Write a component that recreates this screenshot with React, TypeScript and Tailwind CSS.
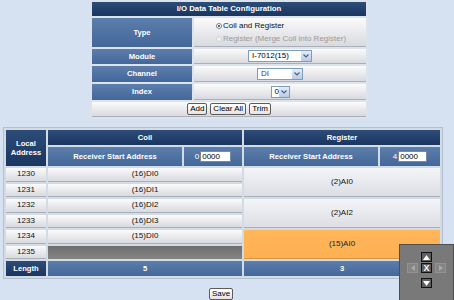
import React from "react";

const navy = "bg-linear-to-b from-[#2d4c78] to-[#193660] text-white font-bold";
const mid = "bg-linear-to-b from-[#5b7eac] to-[#44679a] text-white font-bold";
const light = "bg-linear-to-b from-[#fbfbfc] to-[#d9dadf] border-b border-[#a9b0ba] text-[#111]";
const pale = "bg-linear-to-b from-[#f4f5f8] to-[#dcdee4] border-b border-[#a9b0ba] text-[#111]";

const FakeSelect = ({ width, value, tint }: { width: string; value: string; tint?: string }) => (
  <div className={`flex items-stretch h-[12px] bg-white border border-[#7f9db9] ${width}`}>
    <span className={`flex-1 pl-[3px] text-left text-[8px] leading-[10px] ${tint ?? "text-black"}`}>{value}</span>
    <span className="w-[10px] bg-linear-to-b from-[#e4ecf9] to-[#b9cbe7] flex items-center justify-center">
      <svg width="6" height="4" viewBox="0 0 6 4">
        <path d="M0.5 0.5 L3 3 L5.5 0.5" stroke="#4d6185" strokeWidth="1.2" fill="none" />
      </svg>
    </span>
  </div>
);

const SmallButton = ({ label }: { label: string }) => (
  <span className="block h-[12px] px-[2px] border border-[#5b5b5b] rounded-[2px] bg-linear-to-b from-white to-[#e3e3e3] text-[8px] leading-[10px] text-black">
    {label}
  </span>
);

const Radio = ({ checked, disabled }: { checked?: boolean; disabled?: boolean }) => (
  <span
    className={`inline-flex items-center justify-center w-[6px] h-[6px] rounded-full border mr-[1px] ${
      disabled ? "border-[#cfd3d8] bg-[#f1f1f1]" : "border-[#7c8086] bg-white"
    }`}
  >
    {checked && <span className="w-[2px] h-[2px] rounded-full bg-[#333]" />}
  </span>
);

const rows = [
  { addr: 1230, coil: "(16)DI0", reg: "(2)AI0", orange: false },
  { addr: 1231, coil: "(16)DI1", reg: null, orange: false },
  { addr: 1232, coil: "(16)DI2", reg: "(2)AI2", orange: false },
  { addr: 1233, coil: "(16)DI3", reg: null, orange: false },
  { addr: 1234, coil: "(15)DI0", reg: "(15)AI0", orange: true },
  { addr: 1235, coil: null, reg: null, orange: false },
];

const NavBtn = ({ children, dim }: { children: React.ReactNode; dim?: boolean }) => (
  <span
    className={`flex items-center justify-center w-[11px] h-[10px] border ${
      dim ? "border-[#939393] bg-[#848484]" : "border-[#111] bg-[#5e5e5e]"
    }`}
  >
    {children}
  </span>
);

export default function App() {
  return (
    <div className="relative w-[454px] h-[300px] overflow-hidden bg-[#d6e2f1] font-['Liberation_Sans',Arial,sans-serif] text-[8px] leading-[10px]">
      {/* configuration table */}
      <table className="ml-[90px] w-[278px] border-separate border-spacing-[2px] bg-[#dde3ea] text-center">
        <tbody>
          <tr>
            <td colSpan={2} className={`${navy} h-[14px] p-0 text-[7.8px]`}>
              I/O Data Table Configuration
            </td>
          </tr>
          <tr>
            <td className={`${mid} w-[100px] h-[29px] p-0 text-[7.6px]`}>Type</td>
            <td className={`${light} p-0`}>
              <div className="flex justify-center">
                <div className="text-left leading-[13px] pl-[2px]">
                  <div className="flex items-center">
                    <Radio checked />
                    <span>Coil and Register</span>
                  </div>
                  <div className="flex items-center text-[#9a9a9a]">
                    <Radio disabled />
                    <span>Register (Merge Coil into Register)</span>
                  </div>
                </div>
              </div>
            </td>
          </tr>
          <tr>
            <td className={`${mid} h-[15px] p-0 text-[7.6px]`}>Module</td>
            <td className={`${light} p-0`}>
              <div className="flex justify-center">
                <FakeSelect width="w-[64px]" value="I-7012(15)" />
              </div>
            </td>
          </tr>
          <tr>
            <td className={`${mid} h-[16px] p-0 text-[7.6px]`}>Channel</td>
            <td className={`${light} p-0`}>
              <div className="flex justify-center">
                <FakeSelect width="w-[46px]" value="DI" tint="text-[#5a2b7a]" />
              </div>
            </td>
          </tr>
          <tr>
            <td className={`${mid} h-[16px] p-0 text-[7.6px]`}>Index</td>
            <td className={`${light} p-0`}>
              <div className="flex justify-center">
                <FakeSelect width="w-[19px]" value="0" />
              </div>
            </td>
          </tr>
          <tr>
            <td colSpan={2} className={`${light} h-[15px] p-0`}>
              <div className="flex justify-center gap-[3px]">
                <SmallButton label="Add" />
                <SmallButton label="Clear All" />
                <SmallButton label="Trim" />
              </div>
            </td>
          </tr>
        </tbody>
      </table>

      {/* mapping table */}
      <table className="mt-[9px] ml-[4px] w-[438px] border-separate border-spacing-x-[2px] border-spacing-y-[2px] bg-[#d3dbe5] outline outline-[#b3c0d0] text-center">
        <tbody>
          <tr>
            <td rowSpan={2} className={`${navy} w-[40px] p-0 text-[7.6px] leading-[9px]`}>
              Local
              <br />
              Address
            </td>
            <td colSpan={2} className={`${navy} h-[15px] p-0 text-[7.6px]`}>Coil</td>
            <td colSpan={2} className={`${navy} p-0 text-[7.6px]`}>Register</td>
          </tr>
          <tr>
            <td className={`${mid} w-[134px] h-[19px] p-0 text-[7.6px]`}>Receiver Start Address</td>
            <td className={`${mid} w-[58px] p-0 font-normal`}>
              <div className="flex items-center justify-center">
                <span className="mr-[1px]">0</span>
                <span className="w-[31px] h-[11px] bg-white border border-[#7a8a9e] text-black text-left pl-[1px] leading-[9px]">
                  0000
                </span>
              </div>
            </td>
            <td className={`${mid} w-[134px] p-0 text-[7.6px]`}>Receiver Start Address</td>
            <td className={`${mid} w-[60px] p-0 font-normal`}>
              <div className="flex items-center justify-center">
                <span className="mr-[1px]">4</span>
                <span className="w-[29px] h-[11px] bg-white border border-[#7a8a9e] text-black text-left pl-[1px] leading-[9px]">
                  0000
                </span>
              </div>
            </td>
          </tr>
          {rows.map((r, i) => (
            <tr key={r.addr}>
              <td className={`${light} h-[13.5px] p-0`}>{r.addr}</td>
              {r.coil ? (
                <td colSpan={2} className={`${light} p-0`}>{r.coil}</td>
              ) : (
                <td colSpan={2} className="p-0 bg-linear-to-b from-[#6d6d6d] to-[#868686]" />
              )}
              {i % 2 === 0 && (
                <td
                  colSpan={2}
                  rowSpan={2}
                  className={`p-0 ${
                    r.orange
                      ? "bg-linear-to-b from-[#ffb65a] to-[#fdb050] border-b border-[#d9963f] text-[#222]"
                      : pale
                  }`}
                >
                  {r.reg}
                </td>
              )}
            </tr>
          ))}
          <tr>
            <td className={`${navy} h-[15px] p-0 text-[7.6px]`}>Length</td>
            <td colSpan={2} className={`${mid} p-0 text-[7.6px]`}>5</td>
            <td colSpan={2} className={`${mid} p-0 text-[7.6px]`}>3</td>
          </tr>
        </tbody>
      </table>

      <div className="ml-[209px] mt-[10px] w-fit">
        <SmallButton label="Save" />
      </div>

      {/* floating navigation pad */}
      <div className="absolute left-[399px] top-[244px] w-[55px] h-[60px] bg-[#797979] border border-[#4e4e4e] flex flex-col items-center pt-[7px]">
        <NavBtn>
          <svg width="7" height="5" viewBox="0 0 7 5"><path d="M3.5 0 L7 5 L0 5 Z" fill="#fff" /></svg>
        </NavBtn>
        <div className="flex gap-[3px] mt-[1px]">
          <NavBtn dim>
            <svg width="4" height="6" viewBox="0 0 4 6"><path d="M0 3 L4 0 L4 6 Z" fill="#a9a9a9" /></svg>
          </NavBtn>
          <NavBtn>
            <span className="text-[9px] leading-none font-bold text-white">X</span>
          </NavBtn>
          <NavBtn dim>
            <svg width="4" height="6" viewBox="0 0 4 6"><path d="M4 3 L0 0 L0 6 Z" fill="#a9a9a9" /></svg>
          </NavBtn>
        </div>
        <div className="mt-[5px]">
          <NavBtn>
            <svg width="7" height="5" viewBox="0 0 7 5"><path d="M0 0 L7 0 L3.5 5 Z" fill="#fff" /></svg>
          </NavBtn>
        </div>
      </div>
    </div>
  );
}
